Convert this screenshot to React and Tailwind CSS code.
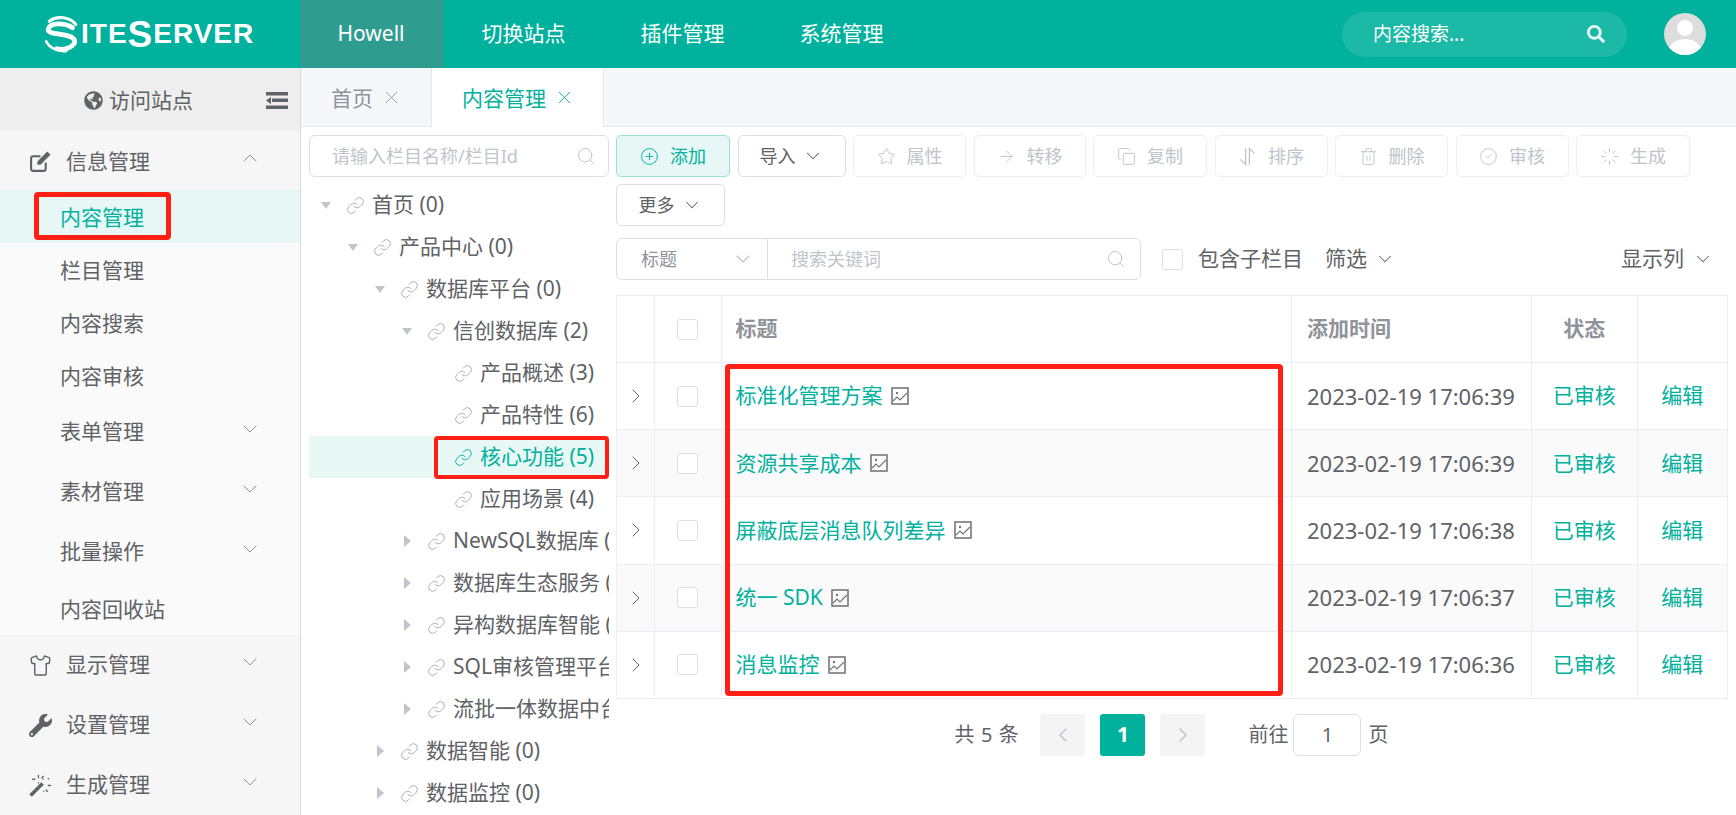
import { ChevronDown, ChevronUp, ChevronLeft, ChevronRight, CirclePlus, Star, ArrowRight, Copy, Trash2, CircleCheck, Loader, Search, X, Link, Shirt } from 'lucide-react'
import { FaGlobeAmericas, FaWrench, FaSearch } from 'react-icons/fa'

const NAV = ['切换站点', '插件管理', '系统管理']

function SortIcon({ size }) {
  return (
    <svg width={size} height={size} viewBox="0 0 20 20" fill="none" stroke="currentColor" strokeWidth="1.4">
      <path d="M8 1.5v17L2.5 13" />
      <path d="M12 18.5v-17l5.5 5.5" />
    </svg>
  )
}

function EditIcon({ size, className }) {
  return (
    <svg width={size} height={size} viewBox="0 0 22 22" className={className}>
      <path d="M16 12v6a2 2 0 0 1-2 2H4a2 2 0 0 1-2-2V8a2 2 0 0 1 2-2h7" fill="none" stroke="currentColor" strokeWidth="2" />
      <path d="M8 11L17.5 1.5l3 3L11 14H8z" fill="currentColor" />
    </svg>
  )
}

function WandIcon({ size, className }) {
  return (
    <svg width={size} height={size} viewBox="0 0 22 22" className={className} stroke="currentColor" fill="none">
      <path d="M1.5 20.5L13 9" strokeWidth="3.4" />
      <path d="M9 1v3M9 8v1M3 5h3M13 5h1M14 2l-2 2M18 11h3M16 15l2 2M18 5l1-1M14 16v1" strokeWidth="1.3" />
    </svg>
  )
}

function OutdentIcon({ className }) {
  return (
    <svg width="22" height="18" viewBox="0 0 22 18" fill="currentColor" className={className}>
      <rect x="0" y="0" width="22" height="3.5" />
      <rect x="6" y="6.5" width="16" height="3.5" />
      <path d="M5 5v7L0 8.5z" />
      <rect x="0" y="13.5" width="22" height="3.5" />
    </svg>
  )
}

const BUTTONS = [
  { label: '属性', Icon: Star, w: 'w-[113px]' },
  { label: '转移', Icon: ArrowRight, w: 'w-[112px]' },
  { label: '复制', Icon: Copy, w: 'w-[114px]' },
  { label: '排序', Icon: SortIcon, w: 'w-[113px]' },
  { label: '删除', Icon: Trash2, w: 'w-[113px]' },
  { label: '审核', Icon: CircleCheck, w: 'w-[113px]' },
  { label: '生成', Icon: Loader, w: 'w-[114px]' },
]

const TREE = [
  { level: 0, label: '首页 (0)', caret: 'down' },
  { level: 1, label: '产品中心 (0)', caret: 'down' },
  { level: 2, label: '数据库平台 (0)', caret: 'down' },
  { level: 3, label: '信创数据库 (2)', caret: 'down' },
  { level: 4, label: '产品概述 (3)' },
  { level: 4, label: '产品特性 (6)' },
  { level: 4, label: '核心功能 (5)', active: true },
  { level: 4, label: '应用场景 (4)' },
  { level: 3, label: 'NewSQL数据库 (0)', caret: 'right' },
  { level: 3, label: '数据库生态服务 (0)', caret: 'right' },
  { level: 3, label: '异构数据库智能 (0)', caret: 'right' },
  { level: 3, label: 'SQL审核管理平台 (0)', caret: 'right' },
  { level: 3, label: '流批一体数据中台 (0)', caret: 'right' },
  { level: 2, label: '数据智能 (0)', caret: 'right' },
  { level: 2, label: '数据监控 (0)', caret: 'right' },
]

const ROWS = [
  { title: '标准化管理方案', time: '2023-02-19 17:06:39' },
  { title: '资源共享成本', time: '2023-02-19 17:06:39' },
  { title: '屏蔽底层消息队列差异', time: '2023-02-19 17:06:38' },
  { title: '统一 SDK', time: '2023-02-19 17:06:37' },
  { title: '消息监控', time: '2023-02-19 17:06:36' },
]

function Logo() {
  return (
    <div className="ml-[43px] flex w-[257px] items-center text-white">
      <svg width="38" height="38" viewBox="0 0 36 36" fill="none" stroke="white" strokeLinecap="round">
        <path d="M31 9C26 2 13 0 6 6" strokeWidth="3" />
        <path d="M28 12C20 7 7 7 5 13c-2 7 22 3 25 11 1 5-8 10-17 8" strokeWidth="4.5" />
        <path d="M3 25c3 6 11 10 19 9" strokeWidth="2.5" />
      </svg>
      <span className="font-['Liberation_Sans',sans-serif] text-[28px] leading-none font-bold tracking-[1px]">ITE</span>
      <span className="font-['Liberation_Sans',sans-serif] text-[37px] leading-none font-bold tracking-[1px]">S</span>
      <span className="font-['Liberation_Sans',sans-serif] text-[28px] leading-none font-bold tracking-[1px]">ERVER</span>
    </div>
  )
}

function SideGroup({ Icon, label, open }) {
  const Chevron = open ? ChevronUp : ChevronDown
  return (
    <div className={'flex h-[60px] items-center bg-[#f6f6f6] pl-[29px] pr-[38px]' + (open ? ' pt-[3px]' : '')}>
      <span className="flex w-[37px] shrink-0 text-[#5f6368]"><Icon size={23} strokeWidth={1.5} /></span>
      <span>{label}</span>
      <Chevron size={24} strokeWidth={1} className="ml-auto -mt-[7px] text-[#909399]" />
    </div>
  )
}

function SideItem({ label, active, more }) {
  return (
    <div className={'relative flex items-center pl-[60px] pr-[38px] ' + (more ? 'h-[60px]' : 'h-[53px] pt-[2px]') + (active ? ' bg-[#e6f7f5] text-[#00b19d]' : '')}>
      <span>{label}</span>
      {more && <ChevronDown size={24} strokeWidth={1} className="ml-auto -mt-[7px] text-[#909399]" />}
      {active && <div className="absolute left-[34px] top-[2px] h-[48px] w-[137px] rounded-[4px] border-[5px] border-[#ff2015]" />}
    </div>
  )
}

function Sidebar() {
  return (
    <aside className="w-[301px] shrink-0 border-r border-[#d9d9d9] bg-[#fafafa] text-[21px] text-[#606266]">
      <div className="flex h-[62px] items-center bg-[#eeeeee] pl-[84px] pr-[12px] pt-[3px]">
        <FaGlobeAmericas size={19} className="text-[#5f6368]" />
        <span className="ml-[6px]">访问站点</span>
        <OutdentIcon className="ml-auto text-[#5f6368]" />
      </div>
      <SideGroup Icon={EditIcon} label="信息管理" open />
      <SideItem label="内容管理" active />
      <SideItem label="栏目管理" />
      <SideItem label="内容搜索" />
      <SideItem label="内容审核" />
      <SideItem label="表单管理" more />
      <SideItem label="素材管理" more />
      <SideItem label="批量操作" more />
      <SideItem label="内容回收站" />
      <SideGroup Icon={Shirt} label="显示管理" />
      <SideGroup Icon={FaWrench} label="设置管理" />
      <SideGroup Icon={WandIcon} label="生成管理" />
    </aside>
  )
}

function Tabs() {
  return (
    <div className="flex h-[59px] shrink-0 border-b border-[#e4e7ed] bg-[#f5f7fb] text-[21px]">
      <div className="flex w-[131px] items-center border-r border-[#e4e7ed] pl-[30px] pt-[3px] text-[#909399]">
        首页
        <X size={21} strokeWidth={1} className="ml-[8px] -mt-[3px]" />
      </div>
      <div className="-mb-px flex w-[172px] items-center border-r border-[#e4e7ed] bg-white pl-[30px] pt-[3px] text-[#00b19d]">
        内容管理
        <X size={21} strokeWidth={1} className="ml-[8px] -mt-[3px]" />
      </div>
    </div>
  )
}

function TreeRow({ node }) {
  return (
    <div
      className={'relative flex h-[42px] items-center whitespace-nowrap ' + (node.active ? 'bg-[#e8f8f5] text-[#00b19d]' : 'text-[#606266]')}
      style={{ paddingLeft: 12 + node.level * 27 }}
    >
      <span className="flex w-[25px] shrink-0">
        {node.caret === 'down' && <span className="h-0 w-0 border-x-[5.5px] border-t-[7px] border-x-transparent border-t-[#c0c4cc]" />}
        {node.caret === 'right' && <span className="ml-[2px] h-0 w-0 border-y-[6px] border-l-[7px] border-y-transparent border-l-[#c0c4cc]" />}
      </span>
      <Link size={19} strokeWidth={1.2} className={'mr-[7px] shrink-0 ' + (node.active ? 'text-[#00b19d]' : 'text-[#a8abb2]')} />
      <span>{node.label}</span>
      {node.active && <div className="absolute left-[125px] top-0 h-[43px] w-[175px] rounded-[4px] border-[4px] border-[#ff2015]" />}
    </div>
  )
}

function TreePanel() {
  return (
    <div className="w-[308px] shrink-0 pl-[8px] pt-[8px]">
      <div className="flex h-[42px] items-center rounded-[6px] border border-[#dcdfe6] pl-[22px] pr-[12px] text-[18px] text-[#c0c4cc]">
        <span>请输入栏目名称/栏目Id</span>
        <Search size={20} strokeWidth={1.2} className="ml-auto" />
      </div>
      <div className="mt-[7px] overflow-hidden text-[21px]">
        {TREE.map((node) => <TreeRow key={node.label} node={node} />)}
      </div>
    </div>
  )
}

function Toolbar() {
  return (
    <div className="flex flex-wrap gap-x-[7.5px] gap-y-[7px] text-[18px]">
      <button className="flex h-[42px] w-[114px] items-center justify-center gap-[11px] rounded-[5px] border border-[#99e0d8] bg-[#e6f7f5] text-[#00b19d]">
        <CirclePlus size={19} strokeWidth={1.2} />
        添加
      </button>
      <button className="flex h-[42px] w-[108px] items-center justify-center gap-[6px] rounded-[5px] border border-[#dcdfe6] text-[#606266]">
        导入
        <ChevronDown size={22} strokeWidth={1.1} />
      </button>
      {BUTTONS.map(({ label, Icon, w }) => (
        <button key={label} className={'flex h-[42px] items-center justify-center gap-[11px] rounded-[5px] border border-[#ebeef5] text-[#c0c4cc] ' + w}>
          <Icon size={19} strokeWidth={1.2} />
          {label}
        </button>
      ))}
      <button className="flex h-[42px] w-[109px] items-center justify-center gap-[6px] rounded-[5px] border border-[#dcdfe6] text-[#606266]">
        更多
        <ChevronDown size={22} strokeWidth={1.1} />
      </button>
    </div>
  )
}

function Filters() {
  return (
    <div className="mt-[12px] flex h-[42px] items-center text-[21px] text-[#606266]">
      <div className="flex h-full w-[525px] rounded-[6px] border border-[#dcdfe6] text-[18px]">
        <div className="flex w-[151px] items-center border-r border-[#dcdfe6] pl-[24px] pr-[12px] text-[#909399]">
          标题
          <ChevronDown size={24} strokeWidth={1.1} className="ml-auto text-[#c0c4cc]" />
        </div>
        <div className="flex flex-1 items-center pl-[23px] pr-[14px] text-[#c0c4cc]">
          搜索关键词
          <Search size={20} strokeWidth={1.2} className="ml-auto" />
        </div>
      </div>
      <span className="ml-[21px] h-[21px] w-[21px] rounded-[3px] border border-[#dcdfe6]" />
      <span className="ml-[15px]">包含子栏目</span>
      <span className="ml-[22px]">筛选</span>
      <ChevronDown size={22} strokeWidth={1.1} className="ml-[7px]" />
      <span className="ml-auto">显示列</span>
      <ChevronDown size={22} strokeWidth={1.1} className="ml-[8px] mr-[13px]" />
    </div>
  )
}

function PictureIcon() {
  return (
    <svg width="18" height="18" viewBox="0 0 18 18" fill="none" stroke="#777777" strokeWidth="1.6" className="ml-[8px] shrink-0">
      <rect x="1" y="1" width="16" height="16" />
      <circle cx="6" cy="6" r="1.2" fill="#777777" stroke="none" />
      <path d="M2 14l4-4 3 3 7-7" strokeWidth="1.2" />
    </svg>
  )
}

function ContentTable() {
  const cell = 'border border-[#ebeef5]'
  return (
    <div className="relative mt-[15px]">
      <table className="w-full table-fixed border-collapse text-[21px]">
        <colgroup>
          <col className="w-[38px]" />
          <col className="w-[66.5px]" />
          <col className="w-[570.5px]" />
          <col className="w-[240px]" />
          <col className="w-[105.5px]" />
          <col className="w-[90.5px]" />
        </colgroup>
        <thead>
          <tr className="h-[67px] font-bold text-[#909399]">
            <th className={cell} />
            <th className={cell}><span className="mx-auto block h-[21px] w-[21px] rounded-[3px] border border-[#dcdfe6]" /></th>
            <th className={cell + ' pl-[14px] text-left'}>标题</th>
            <th className={cell + ' pl-[15px] text-left'}>添加时间</th>
            <th className={cell + ' text-center'}>状态</th>
            <th className={cell} />
          </tr>
        </thead>
        <tbody>
          {ROWS.map((row, i) => (
            <tr key={row.title + i} className={'h-[67.2px] ' + (i % 2 ? 'bg-[#fafafa]' : 'bg-white')}>
              <td className={cell}><ChevronRight size={24} strokeWidth={1} className="mx-auto text-[#606266]" /></td>
              <td className={cell}><span className="mx-auto block h-[21px] w-[21px] rounded-[3px] border border-[#dcdfe6] bg-white" /></td>
              <td className={cell + ' pl-[14px]'}>
                <div className="flex items-center text-[#00b19d]">{row.title}<PictureIcon /></div>
              </td>
              <td className={cell + ' pl-[15px] text-[22px] text-[#606266]'}>{row.time}</td>
              <td className={cell + ' text-center text-[#00b19d]'}>已审核</td>
              <td className={cell + ' text-center text-[#00b19d]'}>编辑</td>
            </tr>
          ))}
        </tbody>
      </table>
      <div className="absolute left-[109px] top-[69px] h-[332px] w-[558px] rounded-[4px] border-[5px] border-[#ff2015]" />
    </div>
  )
}

function Pager() {
  return (
    <div className="mt-[15px] flex h-[42px] items-center justify-center text-[20px] text-[#606266]">
      <span className="tracking-[0.6px]">共 5 条</span>
      <span className="ml-[21px] flex h-[42px] w-[45px] items-center justify-center rounded-[3px] bg-[#f4f4f5] text-[#c0c4cc]"><ChevronLeft size={24} strokeWidth={1.5} /></span>
      <span className="ml-[15px] flex h-[42px] w-[45px] items-center justify-center rounded-[3px] bg-[#00b19d] text-[21px] font-bold text-white">1</span>
      <span className="ml-[15px] flex h-[42px] w-[45px] items-center justify-center rounded-[3px] bg-[#f4f4f5] text-[#c0c4cc]"><ChevronRight size={24} strokeWidth={1.5} /></span>
      <span className="ml-[43px]">前往</span>
      <span className="ml-[5px] flex h-[42px] w-[68px] items-center justify-center rounded-[6px] border border-[#dcdfe6]">1</span>
      <span className="ml-[7px]">页</span>
    </div>
  )
}

export default function App() {
  return (
    <div className="flex h-[815px] w-[1736px] flex-col overflow-hidden bg-white font-['Noto_Sans','Noto_Sans_CJK_SC',sans-serif]">
      <header className="flex h-[68px] shrink-0 items-center bg-[#00b19d] text-[21px] text-white">
        <Logo />
        <div className="flex h-full w-[144px] items-center bg-[#2e9d90] pl-[37.5px]">Howell</div>
        {NAV.map((n) => <div key={n} className="px-[37.5px]">{n}</div>)}
        <div className="ml-auto flex h-[45px] w-[285px] items-center rounded-full bg-[#1bb9a6] pl-[31px] pr-[22px] text-[19px]">
          内容搜索...
          <FaSearch size={18} className="ml-auto text-[#e6f7f5]" />
        </div>
        <svg width="42" height="42" viewBox="0 0 42 42" className="ml-[37px] mr-[30px] rounded-full">
          <rect width="42" height="42" fill="#dddddd" />
          <circle cx="21" cy="15" r="8" fill="white" />
          <ellipse cx="21" cy="40" rx="17" ry="14" fill="white" />
        </svg>
      </header>
      <div className="flex min-h-0 flex-1">
        <Sidebar />
        <main className="flex min-w-0 flex-1 flex-col">
          <Tabs />
          <div className="flex min-h-0 flex-1">
            <TreePanel />
            <div className="ml-[7px] w-[1111px] pt-[8px]">
              <Toolbar />
              <Filters />
              <ContentTable />
              <Pager />
            </div>
          </div>
        </main>
      </div>
    </div>
  )
}
